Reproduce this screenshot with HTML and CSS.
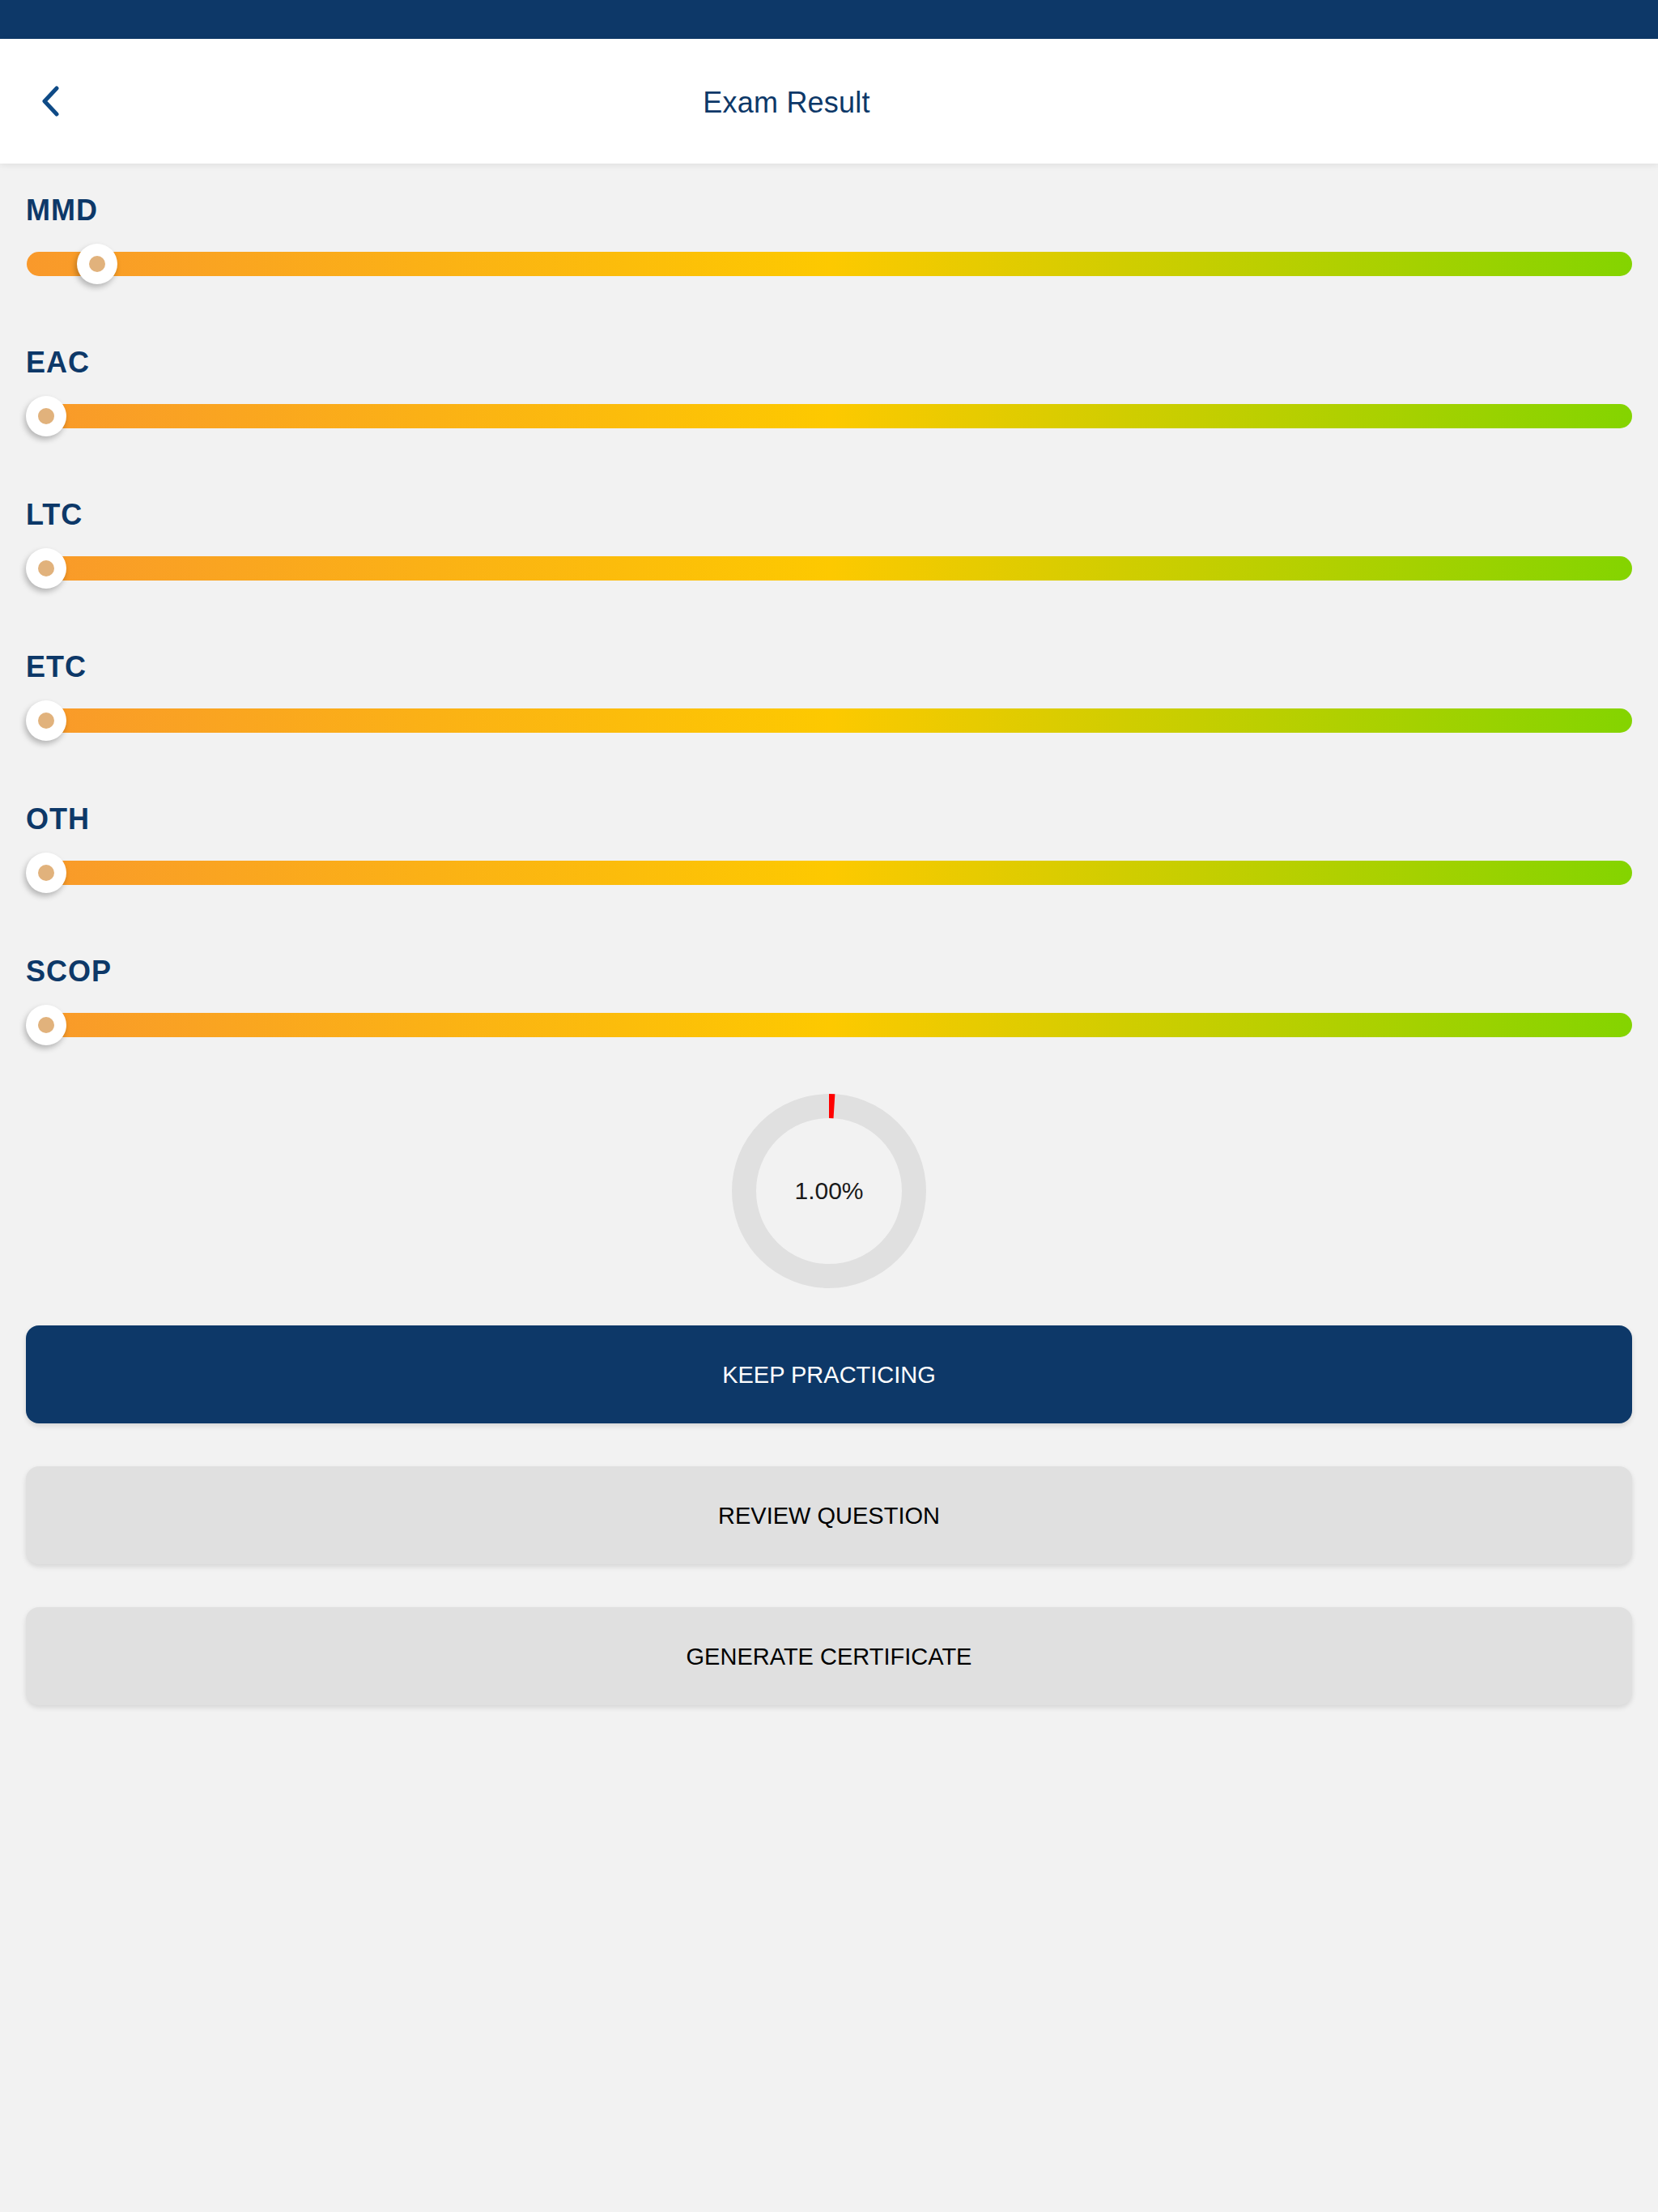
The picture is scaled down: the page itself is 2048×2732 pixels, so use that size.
FILE: index.html
```html
<html>
	<head>
        <meta http-equiv="Content-Type" content="text/html; charset=utf-8">
        <meta name="viewport" content="width=device-width, initial-scale=1.0">
        <title>Exam Result</title>
        <link rel="stylesheet" href="styles.css">
    </head>
    <body>
        <div class="statusBar"></div>
        <div class="header">
            <a class="backButton" href="#">
                <svg width="24" height="38" viewBox="0 0 24 38">
                    <polyline points="19,3 4,19 19,35" fill="none" stroke="#0e4a86" stroke-width="5" stroke-linecap="round" stroke-linejoin="round"/>
                </svg>
            </a>
            <div class="headerTitle">Exam Result</div>
            <div></div>
        </div>
        <div class="container">
            <div class="scoreRow">
                <div class="scoreLabel">MMD</div>
                <div class="slider">
                    <div class="track"></div>
                    <div class="thumb" style="left: 3.2%"><span class="dot"></span></div>
                </div>
            </div>
            <div class="scoreRow">
                <div class="scoreLabel">EAC</div>
                <div class="slider">
                    <div class="track"></div>
                    <div class="thumb" style="left: 0%"><span class="dot"></span></div>
                </div>
            </div>
            <div class="scoreRow">
                <div class="scoreLabel">LTC</div>
                <div class="slider">
                    <div class="track"></div>
                    <div class="thumb" style="left: 0%"><span class="dot"></span></div>
                </div>
            </div>
            <div class="scoreRow">
                <div class="scoreLabel">ETC</div>
                <div class="slider">
                    <div class="track"></div>
                    <div class="thumb" style="left: 0%"><span class="dot"></span></div>
                </div>
            </div>
            <div class="scoreRow">
                <div class="scoreLabel">OTH</div>
                <div class="slider">
                    <div class="track"></div>
                    <div class="thumb" style="left: 0%"><span class="dot"></span></div>
                </div>
            </div>
            <div class="scoreRow">
                <div class="scoreLabel">SCOP</div>
                <div class="slider">
                    <div class="track"></div>
                    <div class="thumb" style="left: 0%"><span class="dot"></span></div>
                </div>
            </div>

            <div class="donut">
                <svg width="240" height="240" viewBox="0 0 240 240">
                    <circle cx="120" cy="120" r="105" fill="none" stroke="#e0e0e0" stroke-width="30"/>
                    <!-- 1% of 2*pi*105 -->
                    <circle cx="120" cy="120" r="105" fill="none" stroke="#ff0000" stroke-width="30" stroke-dasharray="6.6 660" transform="rotate(-90 120 120)"/>
                </svg>
                <div class="donutText">1.00%</div>
            </div>

            <div class="buttons">
                <button class="btn btnPrimary">KEEP PRACTICING</button>
                <button class="btn">REVIEW QUESTION</button>
                <button class="btn">GENERATE CERTIFICATE</button>
            </div>
        </div>
    </body>
</html>
```

FILE: styles.css
```css
body{
    margin: 0;
    background: #f2f2f2;
    font-family: "Liberation Sans", Arial, sans-serif;
    min-height: 2732px;
}
.statusBar{
    height: 48px;
    background: #0d3868;
}
.header{
    position: relative;
    height: 154px;
    background: #fff;
    box-shadow: 0 2px 8px rgba(0, 0, 0, 0.08);
    display: grid;
    grid-template-columns: 106px 1fr 211px;
    align-items: center;
    padding: 0 32px;
}
.backButton{
    display: flex;
    align-items: center;
    padding-left: 19px;
    height: 60px;
}
.headerTitle{
    text-align: center;
    font-size: 36px;
    padding-top: 3px;
    letter-spacing: 0.2px;
    color: #0d3868;
}
.container{
    padding: 35px 32px 0 32px;
}
.scoreRow{
    margin-bottom: 74px;
}
.scoreLabel{
    font-size: 36px;
    line-height: 42px;
    padding-top: 2px;
    font-weight: bold;
    letter-spacing: 1px;
    color: #0d3868;
    margin-bottom: 20px;
}
.slider{
    position: relative;
    height: 50px;
}
.track{
    position: relative;
    top: 10px;
    height: 30px;
    margin-left: 1px;
    border-radius: 15px;
    background: linear-gradient(to right, #f9992b 0%, #fdc900 50%, #84d400 100%);
}
.thumb{
    position: absolute;
    top: 0;
    width: 50px;
    height: 50px;
    border-radius: 50%;
    background: #fff;
    box-shadow: -2px 4px 7px rgba(0, 0, 0, 0.25);
    display: flex;
    align-items: center;
    justify-content: center;
}
.dot{
    width: 20px;
    height: 20px;
    border-radius: 50%;
    background: #e1b27c;
}
.donut{
    position: relative;
    width: 240px;
    height: 240px;
    margin: -14px auto 0 auto;
}
.donut svg{
    display: block;
}
.donutText{
    position: absolute;
    top: 0;
    left: 0;
    width: 100%;
    height: 100%;
    display: flex;
    align-items: center;
    justify-content: center;
    font-size: 30px;
    color: #1a1a1a;
}
.buttons{
    display: flex;
    flex-direction: column;
    gap: 53px;
    margin-top: 46px;
}
.btn{
    height: 121px;
    width: 100%;
    border: none;
    border-radius: 16px;
    padding-top: 3px;
    background: #e0e0e0;
    color: #000;
    font-family: "Liberation Sans", Arial, sans-serif;
    font-size: 29px;
    box-shadow: 0 3px 6px rgba(0, 0, 0, 0.12);
}
.btnPrimary{
    background: #0d3868;
    color: #fff;
}
```
